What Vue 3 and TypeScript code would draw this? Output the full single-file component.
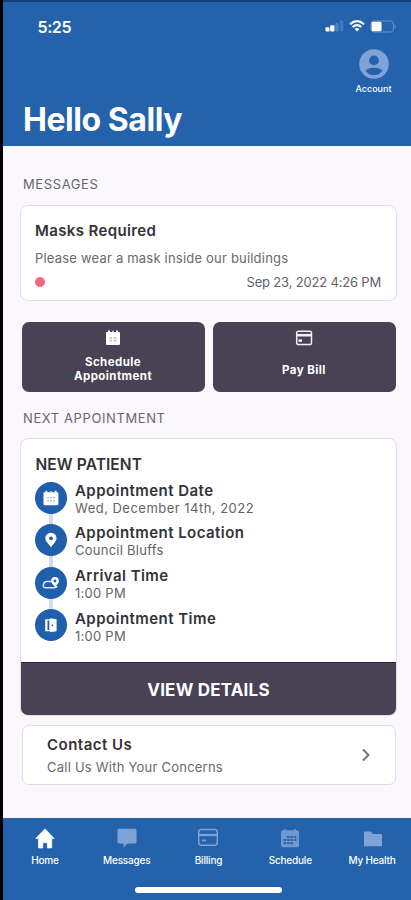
<script setup lang="ts">
interface Detail {
  icon: 'calendar' | 'pin' | 'route' | 'door'
  title: string
  value: string
}

interface Tab {
  icon: 'home' | 'chat' | 'card' | 'schedule' | 'folder'
  label: string
}

const details: Detail[] = [
  { icon: 'calendar', title: 'Appointment Date', value: 'Wed, December 14th, 2022' },
  { icon: 'pin', title: 'Appointment Location', value: 'Council Bluffs' },
  { icon: 'route', title: 'Arrival Time', value: '1:00 PM' },
  { icon: 'door', title: 'Appointment Time', value: '1:00 PM' },
]

const tabs: Tab[] = [
  { icon: 'home', label: 'Home' },
  { icon: 'chat', label: 'Messages' },
  { icon: 'card', label: 'Billing' },
  { icon: 'schedule', label: 'Schedule' },
  { icon: 'folder', label: 'My Health' },
]
</script>

<template>
  <div class="phone">
    <header class="header">
      <div class="status">
        <span class="clock">5:25</span>
        <div class="indicators">
          <svg class="signal" width="19" height="12" viewBox="0 0 19 12">
            <rect x="0.5" y="7.2" width="4" height="4.3" rx="1" fill="#fff" />
            <rect x="5.2" y="5.2" width="4.2" height="6.3" rx="1" fill="#fff" />
            <rect x="10.2" y="3" width="3.4" height="8.5" rx="1" fill="#5084c2" />
            <rect x="14.8" y="0.5" width="3.4" height="11" rx="1" fill="#3f78bb" />
          </svg>
          <svg class="wifi" width="16" height="12" viewBox="0 0 16 12">
            <path d="M1 4.2Q8-1.8 15 4.2M3.6 7Q8 3.4 12.4 7" fill="none" stroke="#fff" stroke-width="2.1" />
            <path d="M5.6 9Q8 7 10.4 9L8 11.6Z" fill="#fff" />
          </svg>
          <svg class="battery" width="27" height="13" viewBox="0 0 27 13">
            <rect x="1" y="1" width="22.5" height="11" rx="3" fill="none" stroke="#6794cc" />
            <rect x="1.6" y="1.8" width="10" height="9.4" rx="1.6" fill="#fff" />
            <path d="M24.8 4.5Q26.6 6.5 24.8 8.5Z" fill="#7ba2d4" />
          </svg>
        </div>
      </div>
      <div class="account">
        <svg width="30" height="30" viewBox="0 0 30 30">
          <circle cx="15" cy="15" r="14.8" fill="#7fa3d7" />
          <circle cx="15" cy="11.4" r="4.9" fill="#2463ac" />
          <path d="M6.6 22Q9 18.8 15 18.8T23.4 22Q20 26.2 15 26.2T6.6 22Z" fill="#2463ac" />
        </svg>
        <span>Account</span>
      </div>
      <h1 class="greeting">Hello Sally</h1>
    </header>

    <main class="content">
      <h2 class="section messages-heading">MESSAGES</h2>
      <article class="message">
        <h3 class="message-title">Masks Required</h3>
        <p class="message-body">Please wear a mask inside our buildings</p>
        <div class="message-meta">
          <span class="dot"></span>
          <time>Sep 23, 2022 4:26 PM</time>
        </div>
      </article>

      <div class="actions">
        <button class="action">
          <svg width="16" height="16" viewBox="0 0 16 16">
            <path d="M1 3Q1 2 2 2H3V.6H5V2H7.3V.8H8.7V2H11V.6H13V2H14Q15 2 15 3V14Q15 15 14 15H2Q1 15 1 14Z" fill="#fff" />
            <path d="M4.5 8H7M8.5 8H11.5M4.5 10.5H7M8.5 10.5H11.5" stroke="#bfbccb" stroke-width="1.4" />
          </svg>
          <span class="two-line">Schedule<br />Appointment</span>
        </button>
        <button class="action">
          <svg width="18" height="16" viewBox="0 0 18 16">
            <rect x="1.7" y="1.2" width="14.8" height="13.3" rx="1.8" fill="none" stroke="#efedf6" stroke-width="1.5" />
            <path d="M2 5.2H16" stroke="#efedf6" stroke-width="2.6" />
            <path d="M3.5 10.6H7" stroke="#fff" stroke-width="2.4" />
          </svg>
          <span class="one-line">Pay Bill</span>
        </button>
      </div>

      <h2 class="section next-heading">NEXT APPOINTMENT</h2>
      <article class="appointment">
        <h3 class="patient">NEW PATIENT</h3>
        <ul class="details">
          <li v-for="item in details" :key="item.title" class="detail">
            <span class="badge">
              <svg v-if="item.icon === 'calendar'" width="32" height="32" viewBox="0 0 32 32">
                <path d="M8.5 11.4Q8.5 10.2 9.7 10.2H10.5V8.8H12.3V10.2H15.3V9.2H16.7V10.2H19.7V8.8H21.5V10.2H22.2Q23.4 10.2 23.4 11.4V22Q23.4 23.2 22.2 23.2H9.7Q8.5 23.2 8.5 22Z" fill="#fff" />
                <path d="M12.2 15.8H20M12.2 18.7H20" stroke="#a9c2e3" stroke-width="1.6" stroke-dasharray="2 .9" />
              </svg>
              <svg v-else-if="item.icon === 'pin'" width="32" height="32" viewBox="0 0 32 32">
                <path d="M16 23.4C13.6 19.7 10.3 17.5 10.3 14.3A5.6 5.6 0 0 1 21.5 14.3C21.5 17.5 18.4 19.7 16 23.4Z" fill="#fff" />
                <circle cx="16" cy="14.3" r="1.9" fill="#1f5fab" />
              </svg>
              <svg v-else-if="item.icon === 'route'" width="32" height="32" viewBox="0 0 32 32">
                <path d="M16.5 14.5H11.5Q9 14.7 8.6 17.3L8.2 18.5Q8.2 20.7 10.5 20.7H18.5Q21.5 20.7 22 19" fill="none" stroke="#dbe8f8" stroke-width="1.4" />
                <path d="M20 20.2C18.4 17.6 16.1 16.6 16.1 14A3.9 3.9 0 0 1 23.9 14C23.9 16.6 21.6 17.6 20 20.2Z" fill="#fff" />
                <circle cx="20" cy="14" r="1.4" fill="#1f5fab" />
              </svg>
              <svg v-else width="32" height="32" viewBox="0 0 32 32">
                <path d="M10.2 10.3H15.2V22.2H10.2ZM15.2 9.3L21.6 10.3V22.2L15.2 23.2Z" fill="#fff" />
                <path d="M13.4 11.6V21" stroke="#1f5fab" stroke-width="1.8" />
                <circle cx="17.3" cy="16.3" r=".9" fill="#1f5fab" />
              </svg>
            </span>
            <div class="detail-text">
              <strong>{{ item.title }}</strong>
              <span>{{ item.value }}</span>
            </div>
          </li>
        </ul>
        <button class="view">VIEW DETAILS</button>
      </article>

      <article class="contact">
        <div>
          <h3 class="contact-title">Contact Us</h3>
          <p class="contact-body">Call Us With Your Concerns</p>
        </div>
        <svg width="10" height="14" viewBox="0 0 10 14">
          <path d="M2 1.5L7.5 7L2 12.5" fill="none" stroke="#747276" stroke-width="1.9" />
        </svg>
      </article>
    </main>

    <nav class="tabs">
      <div v-for="tab in tabs" :key="tab.label" class="tab" :class="tab.icon">
        <svg v-if="tab.icon === 'home'" width="22" height="22" viewBox="0 0 22 22">
          <path d="M11 .8L20.3 10.5H17.8V19.3Q17.8 20 17 20H13.3V14.8H8.8V20H5.2Q4.4 20 4.4 19.3V10.5H1.7Z" fill="#fff" stroke="#fff" stroke-width=".6" stroke-linejoin="round" />
        </svg>
        <svg v-else-if="tab.icon === 'chat'" width="22" height="22" viewBox="0 0 22 22">
          <path d="M2.7.8H18.7Q20.5.8 20.5 2.6V13.7Q20.5 15.5 18.7 15.5H11.5L7.5 19.4V15.5H2.7Q1.5 15.5 1.5 13.7V2.6Q1.5.8 2.7.8Z" fill="#7fa3d7" />
        </svg>
        <svg v-else-if="tab.icon === 'card'" width="22" height="22" viewBox="0 0 22 22">
          <rect x="1.7" y="1.6" width="18.6" height="15.6" rx="2.6" fill="none" stroke="#7fa3d7" stroke-width="1.5" />
          <path d="M2 7H20" stroke="#7fa3d7" stroke-width="2.2" />
          <path d="M5 12.5H9" stroke="#7fa3d7" stroke-width="1.8" />
        </svg>
        <svg v-else-if="tab.icon === 'schedule'" width="22" height="22" viewBox="0 0 22 22">
          <path d="M4 2.2H5.2V.9H6.9V2.2H15.1V.9H16.8V2.2H18Q20 2.2 20 4.2V17.3Q20 19.3 18 19.3H4Q2 19.3 2 17.3V4.2Q2 2.2 4 2.2Z" fill="#6f98d0" />
          <path d="M8 9H17.5M4.5 12H17.5M4.5 15.2H14" stroke="#2b66ae" stroke-width="2.2" stroke-dasharray="2.6 .8" />
        </svg>
        <svg v-else width="22" height="22" viewBox="0 0 22 22">
          <path d="M2.5 3.4H8.6L11 5.9H18.8Q20 5.9 20 7.1V18.3H2V4Q2 3.4 2.5 3.4Z" fill="#7fa3d7" />
        </svg>
        <span>{{ tab.label }}</span>
      </div>
      <i class="home-bar"></i>
    </nav>
  </div>
</template>

<style>
body {
  background: #faf7fc;
  overflow: hidden;
}
</style>

<style scoped>
* {
  box-sizing: border-box;
  margin: 0;
  padding: 0;
}

.phone {
  width: 411px;
  height: 900px;
  border-left: 3px solid #000;
  background: #faf8fd;
  font-family: Inter, "Liberation Sans", sans-serif;
  color: #343238;
  display: flex;
  flex-direction: column;
  white-space: nowrap;
}

svg {
  display: block;
}

.header {
  height: 146px;
  flex: none;
  background: #2463ac;
  border-top: 2px solid #173f77;
  color: #fff;
  display: flex;
  flex-direction: column;
}

.status {
  height: 47px;
  padding: 15px 14px 0 34.5px;
  display: flex;
  justify-content: space-between;
}

.clock {
  font-size: 16px;
  line-height: 20px;
  font-weight: 600;
  letter-spacing: -0.4px;
}

.indicators {
  display: flex;
  gap: 5px;
  padding-top: 3px;
}

.account {
  width: 50px;
  align-self: flex-end;
  margin-right: 12.5px;
  display: flex;
  flex-direction: column;
  align-items: center;
}

.account span {
  font-size: 9px;
  line-height: 12px;
  margin-top: 4px;
  font-weight: 500;
}

.greeting {
  font-size: 32px;
  line-height: 40px;
  font-weight: 700;
  margin: 4.5px 0 0 20px;
  letter-spacing: -0.45px;
}

.content {
  flex: 1;
  padding: 0 14px 0 17px;
}

.section {
  font-size: 13px;
  line-height: 16px;
  font-weight: 400;
  color: #69666c;
  margin-left: 3px;
  letter-spacing: 0.6px;
}

.messages-heading {
  padding-top: 30px;
  height: 59px;
}

.message {
  height: 96px;
  border: 1.5px solid #dfddea;
  border-radius: 8px;
  background: #fff;
  padding: 15px 15px 0 14px;
}

.message-title {
  font-size: 15px;
  line-height: 20px;
  font-weight: 600;
  letter-spacing: 0.37px;
}

.message-body {
  font-size: 13px;
  line-height: 18px;
  margin-top: 8px;
  color: #6b686e;
  letter-spacing: 0.2px;
}

.message-meta {
  margin-top: 6px;
  display: flex;
  justify-content: space-between;
  align-items: center;
  font-size: 13px;
  line-height: 18px;
  color: #65626a;
  letter-spacing: -0.18px;
}

.dot {
  width: 10px;
  height: 10px;
  border-radius: 50%;
  background: #f4667f;
}

.actions {
  display: grid;
  grid-template-columns: 1fr 1fr;
  gap: 8px;
  margin: 21px 1.5px 0 1.5px;
}

.action {
  height: 70px;
  border: 0;
  border-radius: 7px;
  background: #484254;
  color: #fff;
  font: 700 11.5px/14px Inter, "Liberation Sans", sans-serif;
  letter-spacing: 0.43px;
  display: flex;
  flex-direction: column;
  align-items: center;
  padding-top: 8px;
}

.two-line {
  margin-top: 9px;
}

.one-line {
  margin-top: 17px;
}

.next-heading {
  padding-top: 18px;
  height: 46px;
}

.appointment {
  height: 278px;
  border: 1.5px solid #dfddea;
  border-radius: 8px;
  background: #fff;
  overflow: hidden;
  display: flex;
  flex-direction: column;
}

.patient {
  font-size: 15.5px;
  line-height: 20px;
  font-weight: 600;
  margin: 15.5px 0 0 14.5px;
  letter-spacing: 0.1px;
}

.details {
  list-style: none;
  margin: 7.5px 0 0 14px;
}

.detail {
  display: flex;
  height: 42.4px;
  gap: 8px;
  background: linear-gradient(#d4dcef, #d4dcef) 14px 0 / 4px 100% no-repeat;
}

.detail:last-child {
  background: none;
}

.badge {
  width: 32px;
  height: 32px;
  border-radius: 50%;
  background: #1f5fab;
}

.detail-text {
  display: flex;
  flex-direction: column;
}

.detail-text strong {
  font-size: 15px;
  line-height: 18px;
  font-weight: 600;
  letter-spacing: 0.45px;
}

.detail-text span {
  font-size: 13px;
  line-height: 16px;
  color: #65626a;
  letter-spacing: 0.25px;
}

.detail:first-child .detail-text span {
  letter-spacing: 0.48px;
}

.detail:last-child .detail-text {
  padding-top: 1px;
}

.view {
  margin: auto -1.5px -1.5px;
  height: 55px;
  flex: none;
  border: 0;
  border-top: 1px solid #292344;
  background: #484254;
  color: #fff;
  font: 700 17px/20px Inter, "Liberation Sans", sans-serif;
  letter-spacing: 0.2px;
}

.contact {
  height: 60px;
  margin: 9px 1px 0 2px;
  border: 1.5px solid #dfddea;
  border-radius: 7px;
  background: #fff;
  padding: 0 24px 0 24px;
  display: flex;
  align-items: center;
  justify-content: space-between;
}

.contact-title {
  font-size: 15px;
  line-height: 20px;
  font-weight: 600;
  letter-spacing: 0.48px;
}

.contact-body {
  font-size: 13px;
  line-height: 18px;
  margin-top: 3px;
  color: #6b686e;
  letter-spacing: 0.23px;
}

.tabs {
  position: relative;
  height: 82px;
  flex: none;
  background: #2463ac;
  color: #fff;
  display: grid;
  grid-template-columns: repeat(5, 81.8px);
  padding: 9.5px 0 0 1px;
}

.tab {
  display: flex;
  flex-direction: column;
  align-items: center;
}

.folder svg {
  margin-left: 2px;
}

.tab span {
  font-size: 10px;
  line-height: 14px;
  margin-top: 3px;
  font-weight: 500;
  letter-spacing: -0.2px;
}

.home-bar {
  position: absolute;
  left: 132px;
  bottom: 7px;
  width: 147px;
  height: 6px;
  border-radius: 3px;
  background: #fff;
}
</style>
